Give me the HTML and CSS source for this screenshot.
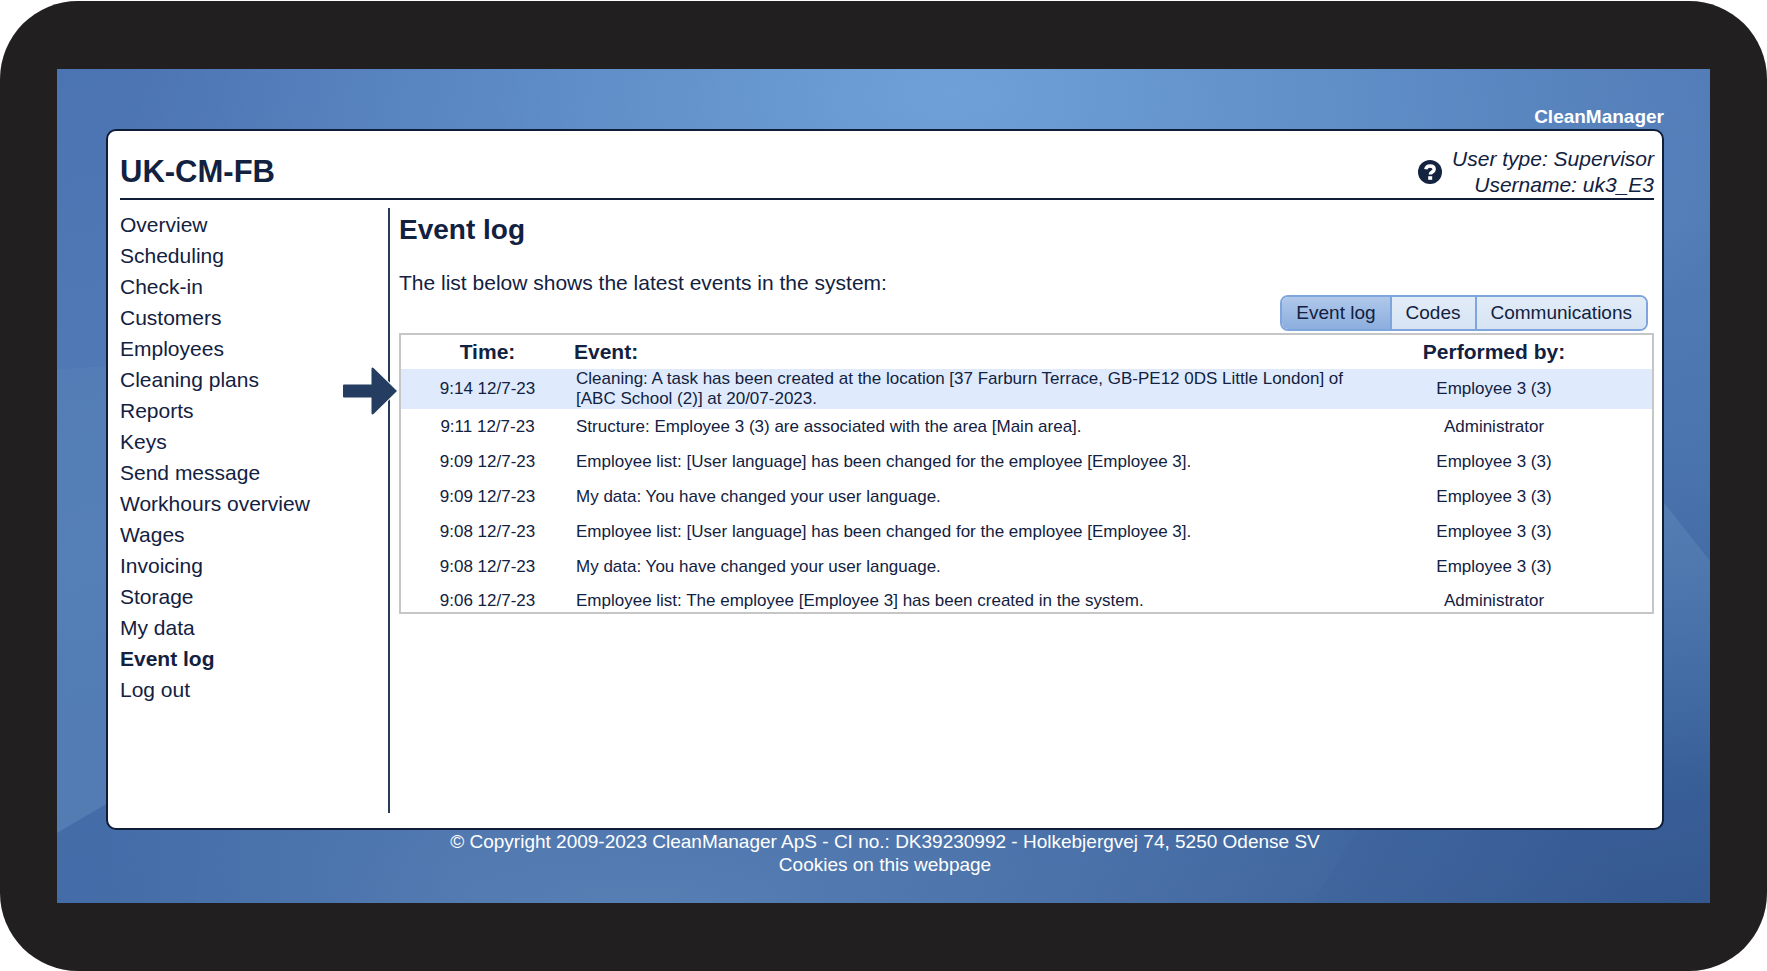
FILE: index.html
```html
<!DOCTYPE html>
<html lang="en">
<head>
<meta charset="utf-8">
<title>CleanManager - Event log</title>
<link rel="stylesheet" href="styles.css">
</head>
<body>
<div class="device">
  <div class="screen">
    <svg class="beams" viewBox="0 0 100 100" preserveAspectRatio="none" aria-hidden="true">
      <defs>
        <linearGradient id="corner-fade" x1="0" y1="0" x2="1" y2="0">
          <stop offset="0.1" stop-color="#4068a5" stop-opacity="0.7"/>
          <stop offset="1" stop-color="#4068a5" stop-opacity="0"/>
        </linearGradient>
        <linearGradient id="right-fade" x1="0" y1="0" x2="0" y2="1">
          <stop offset="0.1" stop-color="#6590be" stop-opacity="0.4"/>
          <stop offset="1" stop-color="#6590be" stop-opacity="0"/>
        </linearGradient>
      </defs>
      <path class="beam-left" d="M0 36L4 35.500V87L0 91.600Z"/>
      <path fill="url(#corner-fade)" d="M0 91.600L3 88.100H24V100H0Z"/>
      <path fill="url(#right-fade)" d="M96 49L100 59V85H96Z"/>
      <path class="beam-bottom" d="M80 87L76 100H100V87Z"/>
    </svg>
    <div class="brand">CleanManager</div>
    <div class="card">
      <header class="card-header">
        <h1 class="company">UK-CM-FB</h1>
        <div class="user">
          <button class="help" type="button" aria-label="Help">
            <svg viewBox="0 0 24 24" aria-hidden="true">
              <circle class="help-disc" cx="12" cy="12" r="12"/>
              <path class="help-hook" d="M7.800 9.300C8.200 6.900 9.800 6 12 6c2.400 0 4.200 1.200 4.200 3.200 0 2.900-3.900 2.600-3.900 5.300"/>
              <rect class="help-dot" x="10.200" y="16.200" width="4" height="3.600"/>
            </svg>
          </button>
          <p class="user-info">User type: Supervisor<br>Username: uk3_E3</p>
        </div>
      </header>
      <div class="body">
        <nav class="menu">
          <a href="#">Overview</a>
          <a href="#">Scheduling</a>
          <a href="#">Check-in</a>
          <a href="#">Customers</a>
          <a href="#">Employees</a>
          <a href="#">Cleaning plans</a>
          <a href="#">Reports</a>
          <a href="#">Keys</a>
          <a href="#">Send message</a>
          <a href="#">Workhours overview</a>
          <a href="#">Wages</a>
          <a href="#">Invoicing</a>
          <a href="#">Storage</a>
          <a href="#">My data</a>
          <a href="#" class="current" aria-current="page">Event log</a>
          <a href="#">Log out</a>
        </nav>
        <main class="content">
          <h2 class="heading">Event log</h2>
          <p class="intro">The list below shows the latest events in the system:</p>
          <div class="tabs">
            <button class="tab active" type="button">Event log</button>
            <button class="tab" type="button">Codes</button>
            <button class="tab" type="button">Communications</button>
          </div>
          <table class="events">
            <thead>
              <tr><th class="time">Time:</th><th class="event">Event:</th><th class="by">Performed by:</th></tr>
            </thead>
            <tbody>
              <tr class="highlight">
                <td class="time">9:14 12/7-23
                  <svg class="arrow" viewBox="0 0 56 50" aria-hidden="true"><path d="M2 18.500H29.500V2.500Q30 1 31.500 2L55 25 31.500 48Q30 49 29.500 47.500V31.500H2Q1 31.500 1 30.500V19.500Q1 18.500 2 18.500Z"/></svg>
                </td>
                <td class="event">Cleaning: A task has been created at the location [37 Farburn Terrace, GB-PE12 0DS Little London] of [ABC School (2)] at 20/07-2023.</td>
                <td class="by">Employee 3 (3)</td>
              </tr>
              <tr><td class="time">9:11 12/7-23</td><td class="event">Structure: Employee 3 (3) are associated with the area [Main area].</td><td class="by">Administrator</td></tr>
              <tr><td class="time">9:09 12/7-23</td><td class="event">Employee list: [User language] has been changed for the employee [Employee 3].</td><td class="by">Employee 3 (3)</td></tr>
              <tr><td class="time">9:09 12/7-23</td><td class="event">My data: You have changed your user language.</td><td class="by">Employee 3 (3)</td></tr>
              <tr><td class="time">9:08 12/7-23</td><td class="event">Employee list: [User language] has been changed for the employee [Employee 3].</td><td class="by">Employee 3 (3)</td></tr>
              <tr><td class="time">9:08 12/7-23</td><td class="event">My data: You have changed your user language.</td><td class="by">Employee 3 (3)</td></tr>
              <tr><td class="time">9:06 12/7-23</td><td class="event">Employee list: The employee [Employee 3] has been created in the system.</td><td class="by">Administrator</td></tr>
            </tbody>
          </table>
        </main>
      </div>
    </div>
    <footer class="footer">
      <p>© Copyright 2009-2023 CleanManager ApS - CI no.: DK39230992 - Holkebjergvej 74, 5250 Odense SV</p>
      <a href="#">Cookies on this webpage</a>
    </footer>
  </div>
</div>
</body>
</html>
```
FILE: styles.css
```css
* {
  box-sizing: border-box;
}

body {
  margin: 0;
  background: #fff;
  color: #12213f;
  font-family: "Liberation Sans", Arial, sans-serif;
  font-size: 21px;
}

h1, h2, p {
  margin: 0;
}

a {
  color: inherit;
  text-decoration: none;
}

button {
  font-family: inherit;
  color: inherit;
  cursor: pointer;
}

.device {
  display: flex;
  min-height: calc(100vh - 1px);
  margin-top: 1px;
  padding: 68px 57px;
  border-radius: 78px;
  background: #221f20;
}

.screen {
  position: relative;
  flex: 1;
  display: flex;
  flex-direction: column;
  padding: 37px 46px 0 49px;
  background:
    radial-gradient(ellipse 50% 50% at 54% 3%, #6fa1d8 0%, #6fa1d800 100%),
    radial-gradient(ellipse 60% 30% at 35% 100%, #587fb4 0%, #587fb400 100%),
    linear-gradient(168deg, #4b74b2 0%, #527cb6 42%, #4a74ae 62%, #3d659f 82%, #33568c 100%);
}

.beams {
  position: absolute;
  inset: 0;
  width: 100%;
  height: 100%;
}

.beam-left {
  fill: #5882b7;
  fill-opacity: 0.5;
}

.beam-bottom {
  fill: #3a6199;
  fill-opacity: 0.2;
}

.brand {
  position: relative;
  color: #fff;
  font-size: 19px;
  font-weight: bold;
  line-height: 22px;
  text-align: right;
}

.card {
  position: relative;
  flex: 1;
  display: flex;
  flex-direction: column;
  margin-top: 1px;
  padding: 15px 8px 15px 12px;
  border: 2px solid #0f1d38;
  border-radius: 10px;
  background: #fff;
}

.card-header {
  display: flex;
  justify-content: space-between;
  align-items: center;
  border-bottom: 2px solid #0f1d38;
}

.company {
  font-size: 31px;
  line-height: 36px;
}

.user {
  display: flex;
  align-items: center;
  gap: 10px;
}

.help {
  width: 24px;
  height: 24px;
  padding: 0;
  border: 0;
  background: none;
}

.help svg {
  display: block;
}

.help-disc {
  fill: #14233f;
}

.help-hook {
  fill: none;
  stroke: #fff;
  stroke-width: 3.4;
}

.help-dot {
  fill: #fff;
}

.user-info {
  font-style: italic;
  line-height: 26px;
  text-align: right;
}

.body {
  flex: 1;
  display: flex;
  margin-top: 8px;
}

.menu {
  flex: none;
  display: flex;
  flex-direction: column;
  width: 270px;
  padding-top: 1px;
  border-right: 2px solid #263a5a;
  line-height: 31px;
}

.current {
  font-weight: bold;
}

.content {
  flex: 1;
  min-width: 0;
  display: flex;
  flex-direction: column;
  padding: 6px 0 0 9px;
}

.heading {
  font-size: 28px;
  line-height: 32px;
}

.intro {
  margin-top: 25px;
  line-height: 24px;
}

.tabs {
  align-self: flex-end;
  display: flex;
  margin: 0 6px 2px 0;
  border: 2px solid #7fa5dd;
  border-radius: 8px;
  overflow: hidden;
}

.tab {
  height: 32px;
  padding: 0 14px;
  border: 0;
  background: linear-gradient(#e2ecf7, #d6e4f4);
  font-size: 19px;
}

.tab + .tab {
  border-left: 2px solid #7fa5dd;
}

.tab.active {
  background: linear-gradient(#b0c8ea, #8caede);
}

.events {
  width: 100%;
  border: 2px solid #c6c6c6;
  border-spacing: 0;
  table-layout: fixed;
  font-size: 17px;
  line-height: 20px;
}

th {
  height: 34px;
  padding: 0;
  font-size: 21px;
}

td {
  height: 35px;
  padding: 0;
}

tr:last-child td {
  height: 28px;
  padding-top: 6px;
}

.highlight td {
  height: 40px;
  background: #dfebfd;
}

.time {
  position: relative;
  width: 173px;
  text-align: center;
}

.event {
  text-align: left;
}

td.event {
  padding-left: 2px;
}

.by {
  width: 276px;
  padding-right: 40px;
  text-align: center;
}

.arrow {
  position: absolute;
  right: 100%;
  top: -3px;
  width: 56px;
  height: 50px;
  margin-right: 3px;
}

.arrow path {
  fill: #243d61;
  stroke: #fff;
  stroke-width: 2;
  paint-order: stroke;
  stroke-linejoin: round;
}

.footer {
  position: relative;
  min-height: 73px;
  color: #fff;
  font-size: 19px;
  line-height: 23px;
  text-align: center;
}
```
